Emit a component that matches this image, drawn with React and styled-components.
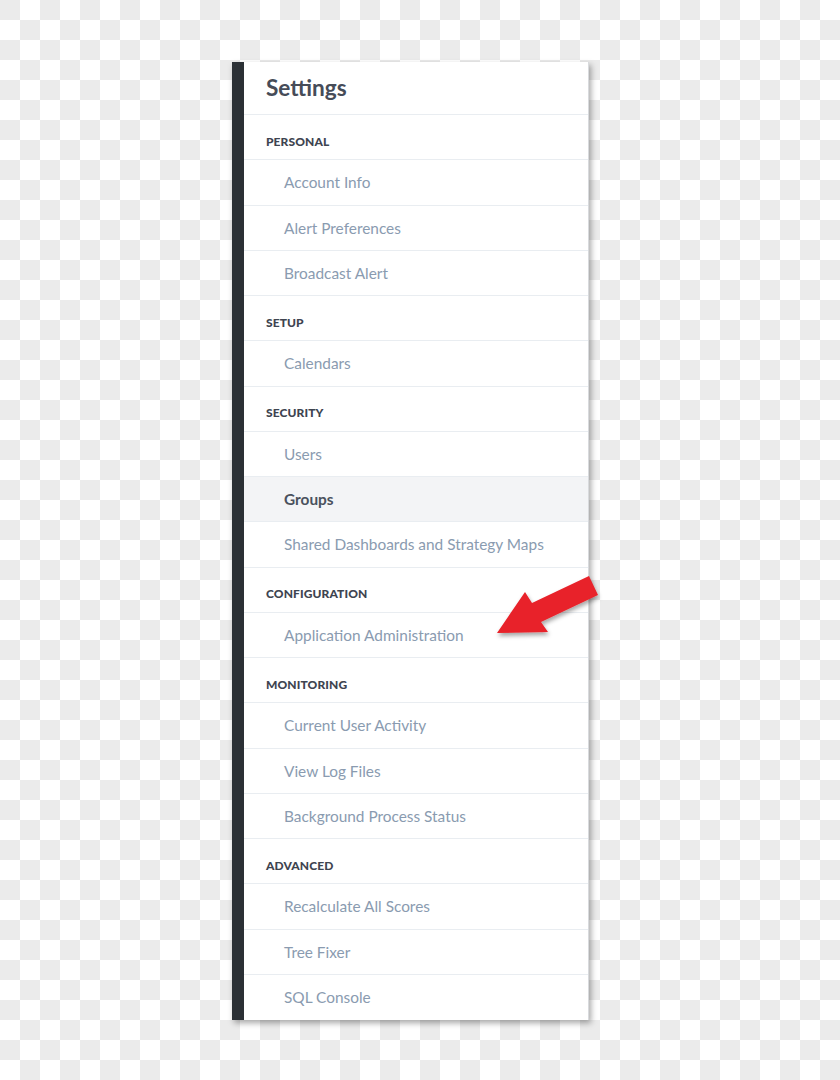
import React from "react";
import styled, { createGlobalStyle } from "styled-components";

const GlobalStyle = createGlobalStyle`
  html, body {
    margin: 0;
    padding: 0;
  }
  body {
    background-color: #ffffff;
    background-image: conic-gradient(
      #ffffff 0 25%,
      #ebebeb 0 50%,
      #ffffff 0 75%,
      #ebebeb 0
    );
    background-size: 40px 40px;
    font-family: Lato, "Open Sans", sans-serif;
  }
`;

const Page = styled.div`
  position: relative;
  width: 840px;
  height: 1080px;
  padding: 62px 0 0 232px;
  box-sizing: border-box;
`;

const Panel = styled.div`
  display: flex;
  width: 357px;
  background: #ffffff;
  box-shadow: 2px 3px 6px rgba(0, 0, 0, 0.35);
`;

const SideBar = styled.div`
  width: 12px;
  flex-shrink: 0;
  background: #2b3035;
`;

const Menu = styled.div`
  flex: 1;
  display: flex;
  flex-direction: column;
  border-right: 1px solid #d8dadd;
`;

const Title = styled.div`
  height: 53px;
  box-sizing: border-box;
  display: flex;
  align-items: center;
  padding: 0 0 2px 22px;
  font-size: 22.6px;
  font-weight: 700;
  color: #464c58;
  border-bottom: 1px solid #e9edf1;
`;

const Row = styled.div`
  height: 45.25px;
  box-sizing: border-box;
  display: flex;
  align-items: center;
  border-bottom: 1px solid #e9edf1;
  &:last-child {
    border-bottom: none;
  }
`;

const SectionRow = styled(Row)`
  padding-left: 22px;
  padding-top: 8px;
  font-size: 12px;
  font-weight: 900;
  letter-spacing: 0.1px;
  color: #3e4450;
  text-transform: uppercase;
`;

const ItemRow = styled(Row)`
  padding-left: 40px;
  font-size: 15.4px;
  font-weight: ${(p) => (p.$active ? 700 : 400)};
  color: ${(p) => (p.$active ? "#4a515d" : "#8a9bb0")};
  background: ${(p) => (p.$active ? "#f3f4f6" : "transparent")};
`;

const ArrowSvg = styled.svg`
  position: absolute;
  left: 480px;
  top: 560px;
  overflow: visible;
`;

const sections = [
  { name: "Personal", items: ["Account Info", "Alert Preferences", "Broadcast Alert"] },
  { name: "Setup", items: ["Calendars"] },
  { name: "Security", items: ["Users", "Groups", "Shared Dashboards and Strategy Maps"] },
  { name: "Configuration", items: ["Application Administration"] },
  {
    name: "Monitoring",
    items: ["Current User Activity", "View Log Files", "Background Process Status"],
  },
  { name: "Advanced", items: ["Recalculate All Scores", "Tree Fixer", "SQL Console"] },
];

const Arrow = () => (
  <ArrowSvg width="140" height="100" viewBox="480 560 140 100">
    <defs>
      <filter id="arrowShadow" x="-20%" y="-20%" width="150%" height="150%">
        <feDropShadow dx="1" dy="3" stdDeviation="2" floodColor="#000" floodOpacity="0.35" />
      </filter>
    </defs>
    <polygon
      points="497,633 525,592 532,603 589,576 598,595 541,622 548,632"
      fill="#e8222a"
      filter="url(#arrowShadow)"
    />
  </ArrowSvg>
);

const App = () => {
  return (
    <>
      <GlobalStyle />
      <Page>
        <Panel>
          <SideBar />
          <Menu>
            <Title>Settings</Title>
            {sections.map((section) => (
              <React.Fragment key={section.name}>
                <SectionRow>{section.name}</SectionRow>
                {section.items.map((item) => (
                  <ItemRow key={item} $active={item === "Groups"}>
                    {item}
                  </ItemRow>
                ))}
              </React.Fragment>
            ))}
          </Menu>
        </Panel>
        <Arrow />
      </Page>
    </>
  );
};

export default App;
